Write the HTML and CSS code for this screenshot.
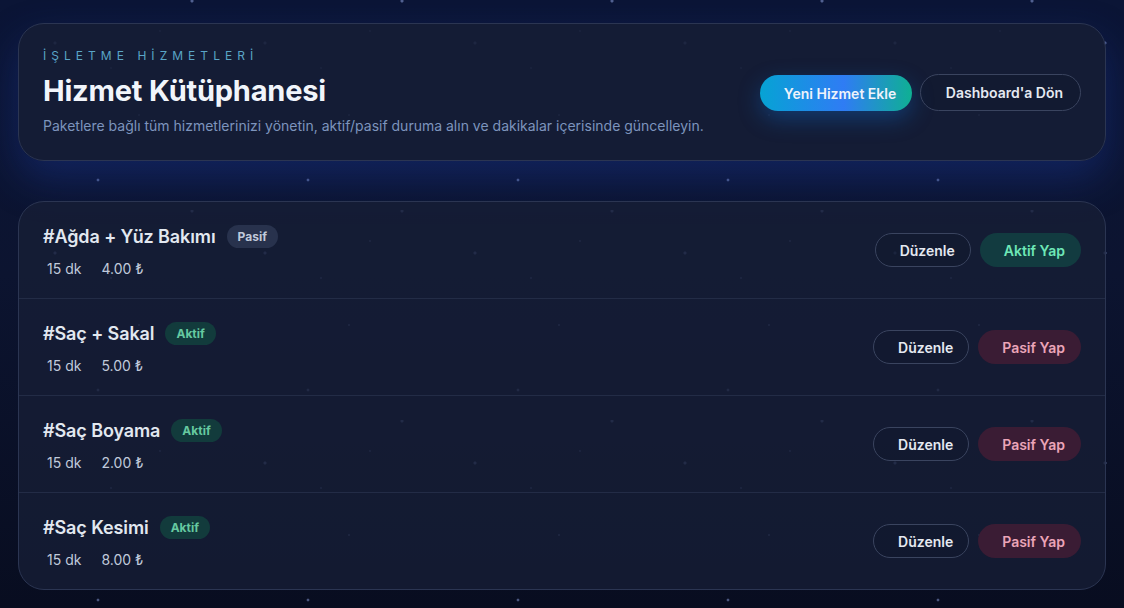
FILE: index.html
```html
<!DOCTYPE html>
<html lang="tr">
<head>
<meta charset="utf-8">
<title>Hizmet Kütüphanesi</title>
<link rel="stylesheet" href="styles.css">
</head>
<body>
<main class="page">
  <section class="hero">
    <div class="hero-text">
      <div class="eyebrow">İşletme Hizmetleri</div>
      <h1 class="title">Hizmet Kütüphanesi</h1>
      <p class="subtitle">Paketlere bağlı tüm hizmetlerinizi yönetin, aktif/pasif duruma alın ve dakikalar içerisinde güncelleyin.</p>
    </div>
    <div class="hero-actions">
      <button class="btn btn-primary">Yeni Hizmet Ekle</button>
      <button class="btn btn-outline btn-lg">Dashboard'a Dön</button>
    </div>
  </section>

  <section class="list">
    <div class="row">
      <div class="info">
        <div class="name-line"><span class="name">#Ağda + Yüz Bakımı</span><span class="badge badge-off">Pasif</span></div>
        <div class="meta"><span>15 dk</span><span>4.00 ₺</span></div>
      </div>
      <div class="actions">
        <button class="btn btn-outline">Düzenle</button>
        <button class="btn btn-on">Aktif Yap</button>
      </div>
    </div>
    <div class="row">
      <div class="info">
        <div class="name-line"><span class="name">#Saç + Sakal</span><span class="badge badge-on">Aktif</span></div>
        <div class="meta"><span>15 dk</span><span>5.00 ₺</span></div>
      </div>
      <div class="actions">
        <button class="btn btn-outline">Düzenle</button>
        <button class="btn btn-off">Pasif Yap</button>
      </div>
    </div>
    <div class="row">
      <div class="info">
        <div class="name-line"><span class="name">#Saç Boyama</span><span class="badge badge-on">Aktif</span></div>
        <div class="meta"><span>15 dk</span><span>2.00 ₺</span></div>
      </div>
      <div class="actions">
        <button class="btn btn-outline">Düzenle</button>
        <button class="btn btn-off">Pasif Yap</button>
      </div>
    </div>
    <div class="row">
      <div class="info">
        <div class="name-line"><span class="name">#Saç Kesimi</span><span class="badge badge-on">Aktif</span></div>
        <div class="meta"><span>15 dk</span><span>8.00 ₺</span></div>
      </div>
      <div class="actions">
        <button class="btn btn-outline">Düzenle</button>
        <button class="btn btn-off">Pasif Yap</button>
      </div>
    </div>
  </section>
</main>
</body>
</html>
```

FILE: styles.css
```css
* { box-sizing: border-box; }
html, body { margin: 0; padding: 0; }
body {
  width: 1124px;
  height: 608px;
  overflow: hidden;
  font-family: Inter, "Noto Sans", sans-serif;
  color: #e2e8f0;
  background-color: #0a1128;
  background-image:
    radial-gradient(circle at 55px 43px, rgba(140,160,220,0.55) 0 1.3px, transparent 1.8px),
    radial-gradient(circle at 192px 1px, rgba(140,160,220,0.55) 0 1.3px, transparent 1.8px),
    radial-gradient(circle at 98px 180px, rgba(140,160,220,0.5) 0 1.2px, transparent 1.7px),
    radial-gradient(circle at 139px 115px, rgba(140,160,220,0.35) 0 1px, transparent 1.5px),
    radial-gradient(circle at 160px 31px, rgba(140,160,220,0.3) 0 1px, transparent 1.5px),
    radial-gradient(circle at 111px 68px, rgba(140,160,220,0.3) 0 1px, transparent 1.5px),
    linear-gradient(180deg, #0b1536 0%, #0c1430 45%, #080d20 100%);
  background-size: 210px 210px, 210px 210px, 210px 210px, 210px 210px, 210px 210px, 210px 210px, 100% 100%;
}
.page {
  padding: 23px 18px 18px;
  display: flex;
  flex-direction: column;
  gap: 40px;
}
.hero {
  height: 138px;
  border: 1px solid #2b3552;
  border-radius: 26px;
  background: rgba(22, 30, 54, 0.88);
  box-shadow: 0 18px 40px rgba(30, 64, 175, 0.35);
  padding: 24px 24px 0 24px;
  display: flex;
  justify-content: space-between;
  align-items: flex-start;
}
.eyebrow {
  font-size: 12px;
  letter-spacing: 0.42em;
  text-transform: uppercase;
  color: #5aa5c6;
  line-height: 16px;
}
.title {
  margin: 9px 0 0;
  font-size: 29px;
  font-weight: 700;
  letter-spacing: -0.2px;
  color: #f1f5fb;
  line-height: 36px;
}
.subtitle {
  margin: 7px 0 0;
  font-size: 14px;
  color: #7d94bd;
  line-height: 20px;
}
.hero-actions {
  display: flex;
  gap: 8px;
  margin-top: 26px;
}
.btn {
  font-family: Inter, "Noto Sans", sans-serif;
  font-size: 14px;
  font-weight: 600;
  height: 34px;
  border-radius: 999px;
  padding: 0 15px 0 24px;
  border: 1px solid transparent;
  color: #e2e8f0;
  background: transparent;
  white-space: nowrap;
  cursor: pointer;
}
.btn-lg { height: 37px; padding: 0 17px 0 25px; }
.btn-primary {
  height: 36px;
  margin-top: 1px;
  width: 152px;
  padding: 0 16px 0 24px;
  background: linear-gradient(90deg, #06a3d4 0%, #2f7cf4 55%, #0fb093 100%);
  color: #eef3fb;
  box-shadow: 0 8px 22px rgba(14, 116, 220, 0.35);
  border: none;
}
.btn-outline {
  border-color: #3a445f;
  color: #e5e9f1;
  background: rgba(15, 22, 42, 0.35);
}
.btn-on {
  background: #123b40;
  color: #6ee7b7;
  padding: 0 15px 0 23px;
}
.btn-off {
  background: #3a1c34;
  color: #eba4b8;
  padding: 0 15px 0 23px;
}
.list {
  border: 1px solid #2b3552;
  border-radius: 26px;
  background: rgba(22, 30, 54, 0.8);
  overflow: hidden;
}
.row {
  height: 97px;
  display: flex;
  align-items: center;
  justify-content: space-between;
  padding: 0 24px 0 24px;
  border-top: 1px solid #232c46;
}
.row:first-child { border-top: none; height: 96px; }
.info { display: flex; flex-direction: column; gap: 10px; margin-top: 3px; }
.name-line { display: flex; align-items: center; gap: 11px; }
.name {
  font-size: 18px;
  font-weight: 600;
  color: #e2e8f0;
  line-height: 24px;
  letter-spacing: -0.1px;
}
.badge {
  font-size: 12px;
  font-weight: 700;
  height: 23px;
  line-height: 23px;
  padding: 0 11px;
  border-radius: 999px;
}
.badge-off { background: #28324d; color: #c0cadb; }
.badge-on { background: #123b3c; color: #66c9a0; }
.meta {
  display: flex;
  gap: 20px;
  padding-left: 4px;
  font-size: 14px;
  color: #c0cadb;
  line-height: 20px;
}
.actions { display: flex; gap: 9px; }
```
